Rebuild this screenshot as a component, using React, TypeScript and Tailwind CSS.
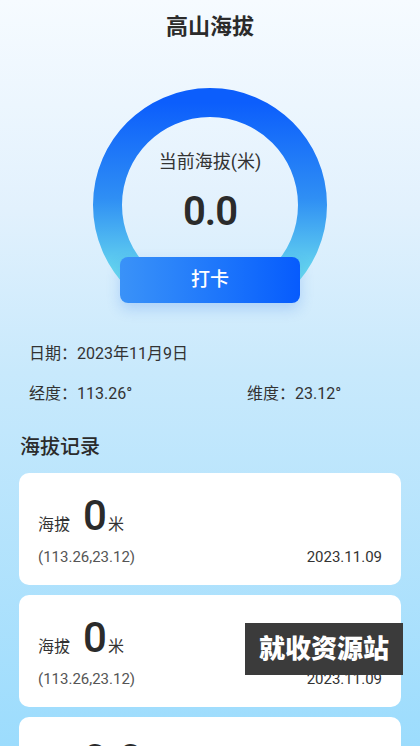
import React from 'react';

type AltRecord = {
    id: number;
    value: string;
    coords: string;
    date: string;
};

const records: AltRecord[] = [
    { id: 1, value: '0', coords: '(113.26,23.12)', date: '2023.11.09' },
    { id: 2, value: '0', coords: '(113.26,23.12)', date: '2023.11.09' },
    { id: 3, value: '0.0', coords: '(113.26,23.12)', date: '2023.11.09' },
];

function Gauge() {
    return (
        <div className="relative mx-auto mt-[46px] flex h-[234px] w-[234px] flex-col items-center">
            <svg className="absolute inset-0" width="234" height="234" viewBox="0 0 234 234">
                <defs>
                    <linearGradient id="ring" x1="0" y1="0" x2="0" y2="1">
                        <stop offset="0%" stopColor="#0c5efc" />
                        <stop offset="55%" stopColor="#2f8ff4" />
                        <stop offset="100%" stopColor="#6adbee" />
                    </linearGradient>
                </defs>
                <path
                    d="M 44.5 189.5 A 102.5 102.5 0 1 1 189.5 189.5"
                    fill="none"
                    stroke="url(#ring)"
                    strokeWidth="29"
                />
            </svg>
            <div className="relative mt-[61px] text-[18px] leading-[26px] text-[#333]">当前海拔(米)</div>
            <div className="relative mt-[13px] text-[40px] font-semibold leading-[48px] tracking-[-1px] text-[#2b2b2b]">0.0</div>
            <button className="relative mt-[21px] flex h-[46px] w-[180px] shrink-0 items-center justify-center rounded-[8px] bg-gradient-to-r from-[#3a92f8] to-[#075bfd] text-[19px] font-medium text-white shadow-[0_6px_14px_rgba(30,110,230,0.22)]">
                打卡
            </button>
        </div>
    );
}

function RecordCard({ rec }: { rec: AltRecord }) {
    return (
        <div className="mx-[19px] mb-[10px] rounded-[10px] bg-white px-[19px] pb-[17px] pt-[21px]">
            <div className="flex h-[44px] items-baseline">
                <span className="text-[16px] text-[#333]">海拔</span>
                <span className="ml-[13px] text-[42px] font-medium leading-[44px] text-[#2b2b2b]">{rec.value}</span>
                <span className="ml-[1px] text-[16px] text-[#333]">米</span>
            </div>
            <div className="mt-[8px] flex items-center justify-between text-[15px] leading-[22px]">
                <span className="text-[#555]">{rec.coords}</span>
                <span className="text-[#333]">{rec.date}</span>
            </div>
        </div>
    );
}

export default function App() {
    return (
        <div
            className="relative h-[746px] w-full overflow-hidden bg-[linear-gradient(180deg,#f6fbff_0%,#e2f1fd_28%,#c8e9fc_50%,#9cdcfd_100%)]"
            style={{ fontFamily: "Roboto, 'Noto Sans CJK SC', sans-serif" }}
        >
            <h1 className="pt-[12px] text-center text-[22px] font-bold leading-[30px] text-[#2b2b2b]">高山海拔</h1>

            <Gauge />

            <div className="mt-[21px] px-[29px] text-[16px] leading-[22px] text-[#333]">日期：2023年11月9日</div>
            <div className="mt-[18px] flex px-[29px] text-[16px] leading-[22px] text-[#333]">
                <span className="w-[218px]">经度：113.26°</span>
                <span>维度：23.12°</span>
            </div>

            <h2 className="mt-[28px] px-[20px] text-[20px] font-medium leading-[28px] text-[#2b2b2b]">海拔记录</h2>

            <div className="mt-[12px]">
                {records.map((r) => (
                    <RecordCard key={r.id} rec={r} />
                ))}
            </div>

            <div className="absolute left-[245px] top-[623px] flex h-[52px] w-[158px] items-center justify-center bg-[#3b3b3b] text-[26px] font-black text-white">
                就收资源站
            </div>
        </div>
    );
}
